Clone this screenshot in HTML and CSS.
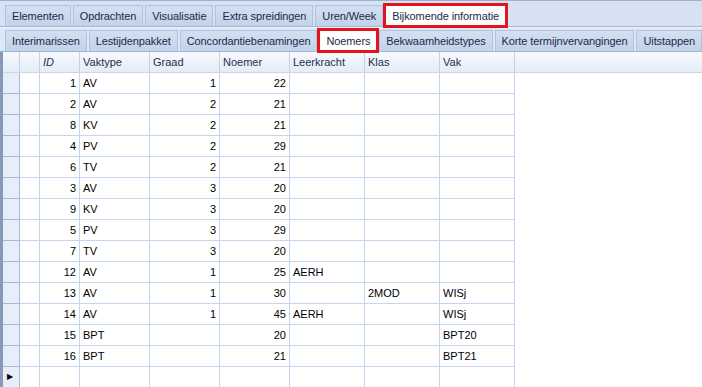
FILE: index.html
```html
<!DOCTYPE html>
<html>

<head>
    <meta charset="utf-8">
    <title>Noemers</title>
    <link rel="stylesheet" href="styles.css">
</head>

<body>
    <div class="tabs">
        <div class="tab-row top">
            <div class="tab">Elementen</div>
            <div class="tab">Opdrachten</div>
            <div class="tab">Visualisatie</div>
            <div class="tab">Extra spreidingen</div>
            <div class="tab">Uren/Week</div>
            <div class="tab active marked">Bijkomende informatie</div>
        </div>
        <div class="tab-row sub">
            <div class="tab">Interimarissen</div>
            <div class="tab">Lestijdenpakket</div>
            <div class="tab">Concordantiebenamingen</div>
            <div class="tab active marked">Noemers</div>
            <div class="tab">Bekwaamheidstypes</div>
            <div class="tab">Korte termijnvervangingen</div>
            <div class="tab">Uitstappen</div>
        </div>
    </div>

    <div class="grid">
        <div class="row head">
            <div class="cell ind"></div>
            <div class="cell"></div>
            <div class="cell"><i>ID</i></div>
            <div class="cell">Vaktype</div>
            <div class="cell">Graad</div>
            <div class="cell">Noemer</div>
            <div class="cell">Leerkracht</div>
            <div class="cell">Klas</div>
            <div class="cell">Vak</div>
            <div class="cell filler"></div>
        </div>
        <div id="rows"></div>
    </div>

    <script>
        // id, vaktype, graad, noemer, leerkracht, klas, vak
        const data = [
            [1, "AV", 1, 22, "", "", ""],
            [2, "AV", 2, 21, "", "", ""],
            [8, "KV", 2, 21, "", "", ""],
            [4, "PV", 2, 29, "", "", ""],
            [6, "TV", 2, 21, "", "", ""],
            [3, "AV", 3, 20, "", "", ""],
            [9, "KV", 3, 20, "", "", ""],
            [5, "PV", 3, 29, "", "", ""],
            [7, "TV", 3, 20, "", "", ""],
            [12, "AV", 1, 25, "AERH", "", ""],
            [13, "AV", 1, 30, "", "2MOD", "WISj"],
            [14, "AV", 1, 45, "AERH", "", "WISj"],
            [15, "BPT", "", 20, "", "", "BPT20"],
            [16, "BPT", "", 21, "", "", "BPT21"]
        ];
        const rightAligned = [0, 2, 3];

        function makeCell(className, text) {
            const c = document.createElement("div");
            c.className = className;
            c.textContent = text;
            return c;
        }

        function addRow(values, isNew) {
            const row = document.createElement("div");
            row.className = "row";
            row.appendChild(makeCell("cell ind", isNew ? "▶" : ""));
            row.appendChild(makeCell("cell", ""));
            values.forEach((v, i) => {
                row.appendChild(makeCell(rightAligned.includes(i) ? "cell num" : "cell", v));
            });
            row.appendChild(makeCell("filler", ""));
            document.getElementById("rows").appendChild(row);
        }

        data.forEach(r => addRow(r, false));
        addRow(["", "", "", "", "", "", ""], true);
    </script>
</body>

</html>
```

FILE: styles.css
```css
body {
    margin: 0;
    font-family: 'Liberation Sans', Arial, sans-serif;
    font-size: 11px;
    color: #000;
    background: #fff;
    overflow: hidden;
}

.tabs {
    border-top: 1px solid #9eb3d2;
    background: #d6e2f2;
}

.tab-row {
    display: flex;
    gap: 2px;
    padding-left: 5px;
    border-bottom: 1px solid #a3b7d4;
}

.tab-row.top {
    height: 21px;
    padding-top: 4px;
}

.tab-row.sub {
    height: 21px;
    padding-top: 2px;
    background: #dde7f5;
    border-top: 1px solid #eef3fa;
}

.tab {
    padding: 0 6px;
    line-height: 21px;
    letter-spacing: -0.1px;
    color: #1b2b45;
    background: linear-gradient(#d3e0f1, #c1d3ea);
    border: 1px solid #b0c3de;
    border-bottom: none;
    white-space: nowrap;
}

.tab.active {
    background: #fff;
    position: relative;
    z-index: 1;
}

.tab.marked {
    outline: 3px solid #e3141c;
    outline-offset: -1px;
}

.grid {
    border-left: 3px solid #8799b8;
}

.row {
    display: grid;
    grid-template-columns: 17px 20px 40px 70px 70px 70px 75px 75px 75px 1fr;
    height: 21px;
}

.cell {
    box-sizing: border-box;
    border-right: 1px solid #c3d5ef;
    border-bottom: 1px solid #c3d5ef;
    padding: 0 3px;
    line-height: 20px;
    white-space: nowrap;
    overflow: hidden;
}

.cell.num {
    text-align: right;
}

.cell.ind {
    background: #e7eef9;
    border-right-color: #a4b7d4;
    border-bottom-color: #a4b7d4;
    font-size: 8px;
    padding: 0 0 0 4px;
}

.head .cell {
    background: linear-gradient(#f7f9fd, #e4ecf7);
    color: #1e2f4d;
    border-bottom-color: #c9d7ea;
    border-right-color: #c3d2e8;
}

.head .cell.filler {
    border-right: none;
}
```
